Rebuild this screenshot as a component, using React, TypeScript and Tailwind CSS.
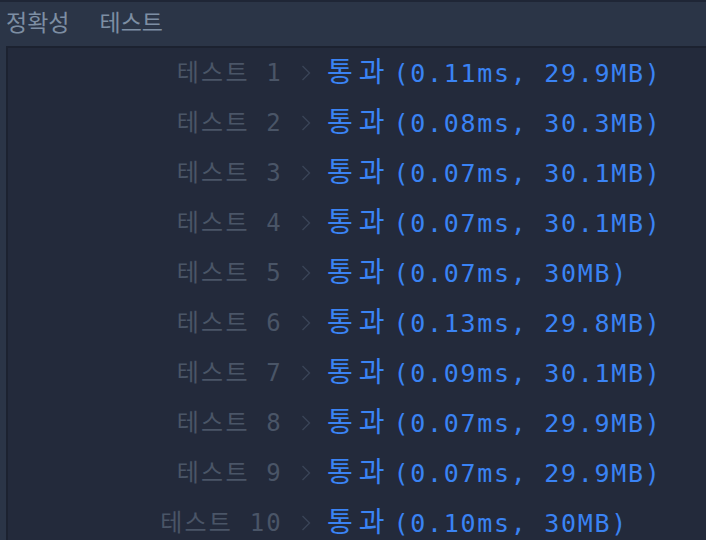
import React from 'react';

const results = [
  { n: 1, time: '0.11ms', mem: '29.9MB' },
  { n: 2, time: '0.08ms', mem: '30.3MB' },
  { n: 3, time: '0.07ms', mem: '30.1MB' },
  { n: 4, time: '0.07ms', mem: '30.1MB' },
  { n: 5, time: '0.07ms', mem: '30MB' },
  { n: 6, time: '0.13ms', mem: '29.8MB' },
  { n: 7, time: '0.09ms', mem: '30.1MB' },
  { n: 8, time: '0.07ms', mem: '29.9MB' },
  { n: 9, time: '0.07ms', mem: '29.9MB' },
  { n: 10, time: '0.10ms', mem: '30MB' },
];

const mono = "font-['DejaVu_Sans_Mono','Noto_Sans_CJK_KR',monospace]";

function Chevron() {
  return (
    <svg width="10" height="16" viewBox="0 0 10 16" className="shrink-0">
      <path d="M1.5 1 L8.5 8 L1.5 15" fill="none" stroke="#3a4457" strokeWidth="1.4" />
    </svg>
  );
}

export default function App() {
  return (
    <div className="h-[540px] w-[706px] overflow-hidden bg-[#2b3547] border-t-2 border-[#1f2636] flex flex-col">
      {/* tabs */}
      <div className="h-[44px] shrink-0 flex items-center gap-[30px] pl-[6px] pb-[5px] font-['Noto_Sans_CJK_KR',sans-serif] text-[23px] text-[#7d8ea3]">
        <span>정확성</span>
        <span>테스트</span>
      </div>

      {/* result panel */}
      <div className={`ml-[6px] flex-1 bg-[#232a3b] border-l-2 border-t-2 border-b-2 border-[#1c2230] ${mono}`}>
        {results.map((r) => (
          <div key={r.n} className="h-[50px] flex items-center text-[24px] tracking-[2.2px] whitespace-pre">
            <div className="w-[275px] shrink-0 text-right text-[#4a5567]">
              테스트 {r.n}
            </div>
            <div className="ml-[18px] w-[26px] shrink-0">
              <Chevron />
            </div>
            <div className="text-[#3a83f4]">
              <span className="text-[28px] tracking-[6px]">통과</span>
              <span className="ml-[3px] text-[25px] tracking-[1.7px]">{`(${r.time}, ${r.mem})`}</span>
            </div>
          </div>
        ))}
      </div>
    </div>
  );
}
